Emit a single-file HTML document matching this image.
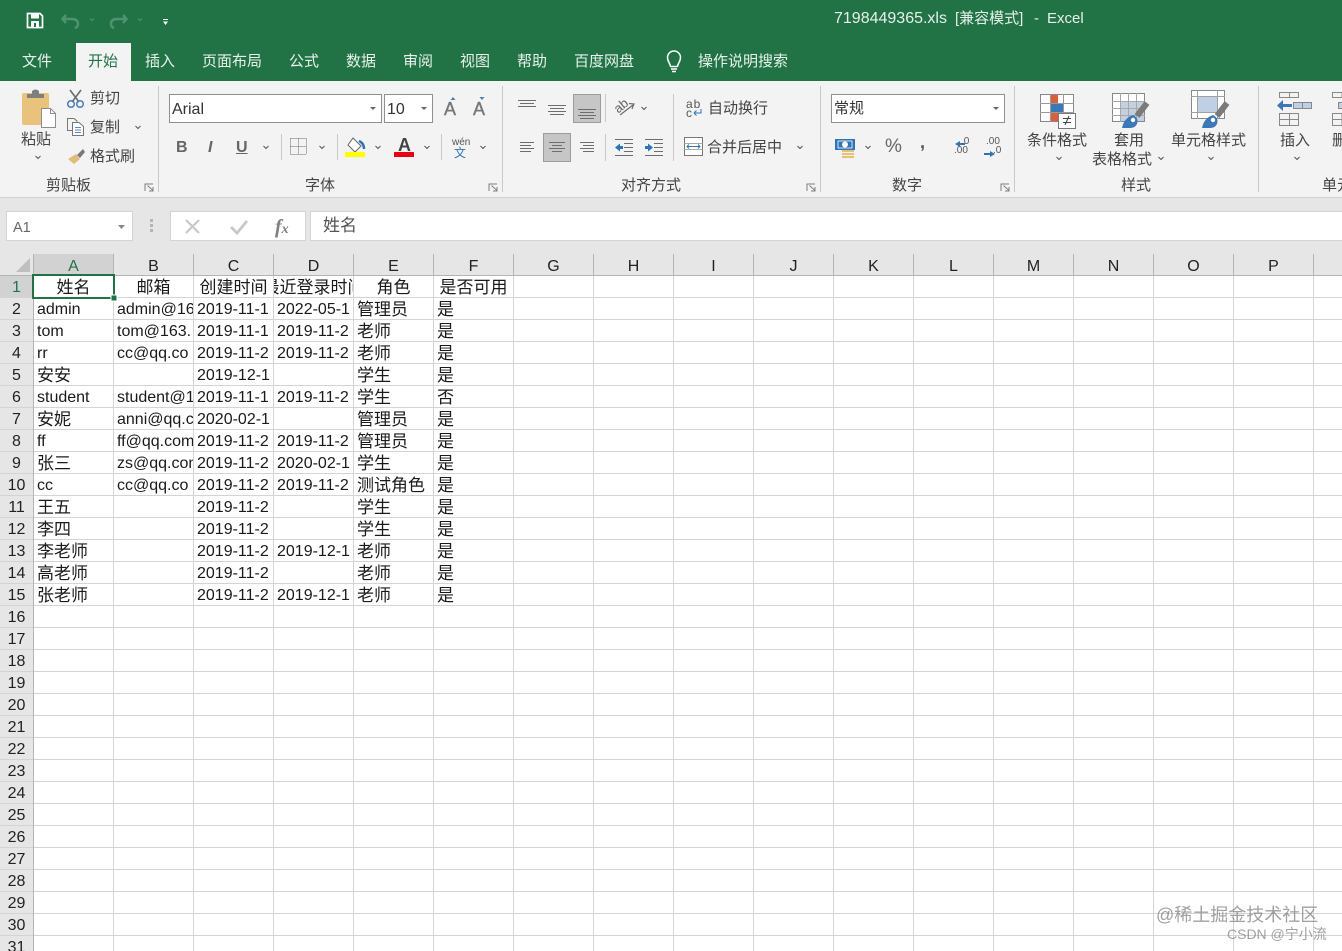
<!DOCTYPE html>
<html lang="zh"><head><meta charset="utf-8"><title>Excel</title>
<style>
html,body{margin:0;padding:0;background:#fff}
#p{position:relative;width:1342px;height:951px;overflow:hidden;background:#fff;font-family:"Liberation Sans","Noto Sans CJK SC",sans-serif;color:#222}
.t{position:absolute;white-space:nowrap;line-height:20px;height:20px}
.tab{top:52px;font-size:15px;color:#e8f1ec}
.rb{font-size:15px;color:#444;margin-top:1px}
.gl{font-size:15px;color:#444;top:176px}
.abs{position:absolute}
.c{position:absolute;height:22px;line-height:24px;overflow:hidden;white-space:nowrap;font-size:16px;color:#1a1a1a;font-family:"Liberation Sans","Noto Sans CJK SC",sans-serif}
.A{left:37px;width:76px}.B{left:117px;width:76px}.C{left:197px;width:76px}.D{left:277px;width:76px}.E{left:357px;width:76px}.F{left:437px;width:76px}
.z{font-size:17px}
.h{display:flex;justify-content:center;font-size:17px;top:276px}
.ch{position:absolute;top:254px;width:79px;height:22px;line-height:25px;text-align:center;font-size:16px;color:#222}
.rh{position:absolute;left:0;width:33px;height:22px;line-height:24px;text-align:center;font-size:16px;color:#222}
</style></head><body><div id="p">
<!-- backgrounds -->
<div class="abs" style="left:0;top:0;width:1342px;height:81px;background:#217346"></div>
<div class="abs" style="left:76px;top:43px;width:55px;height:38px;background:#f3f3f3"></div>
<div class="abs" style="left:0;top:81px;width:1342px;height:116px;background:#f3f3f3"></div>
<div class="abs" style="left:0;top:197px;width:1342px;height:57px;background:#e6e6e6;border-top:1px solid #d2d2d2;box-sizing:border-box"></div>
<div class="abs" style="left:6px;top:211px;width:127px;height:30px;background:#fff;border:1px solid #d4d4d4;box-sizing:border-box"></div>
<div class="abs" style="left:170px;top:211px;width:136px;height:30px;background:#fff;border:1px solid #d4d4d4;box-sizing:border-box"></div>
<div class="abs" style="left:310px;top:211px;width:1040px;height:30px;background:#fff;border:1px solid #d4d4d4;box-sizing:border-box"></div>
<div class="abs" style="left:169px;top:94px;width:213px;height:29px;background:#fff;border:1px solid #8f8f8f;box-sizing:border-box"></div>
<div class="abs" style="left:384px;top:94px;width:49px;height:29px;background:#fff;border:1px solid #8f8f8f;box-sizing:border-box"></div>
<div class="abs" style="left:831px;top:94px;width:174px;height:29px;background:#fff;border:1px solid #8f8f8f;box-sizing:border-box"></div>
<div class="abs" style="left:573px;top:94px;width:28px;height:29px;background:#c6c6c6;border:1px solid #9c9c9c;box-sizing:border-box"></div>
<div class="abs" style="left:543px;top:133px;width:28px;height:29px;background:#c6c6c6;border:1px solid #9c9c9c;box-sizing:border-box"></div>

<!-- grid -->
<svg class="abs" style="left:0;top:0" width="1342" height="951" shape-rendering="crispEdges">
<rect x="0" y="254" width="1342" height="22" fill="#e6e6e6"/>
<rect x="0" y="276" width="33" height="675" fill="#e6e6e6"/>
<rect x="34" y="254" width="80" height="22" fill="#d2d2d2"/>
<rect x="0" y="276" width="33" height="22" fill="#d2d2d2"/>
<path fill="none" stroke="#d4d4d4" d="M0 297.5H1342M0 319.5H1342M0 341.5H1342M0 363.5H1342M0 385.5H1342M0 407.5H1342M0 429.5H1342M0 451.5H1342M0 473.5H1342M0 495.5H1342M0 517.5H1342M0 539.5H1342M0 561.5H1342M0 583.5H1342M0 605.5H1342M0 627.5H1342M0 649.5H1342M0 671.5H1342M0 693.5H1342M0 715.5H1342M0 737.5H1342M0 759.5H1342M0 781.5H1342M0 803.5H1342M0 825.5H1342M0 847.5H1342M0 869.5H1342M0 891.5H1342M0 913.5H1342M0 935.5H1342"/>
<path fill="none" stroke="#d4d4d4" d="M113.5 276V951M193.5 276V951M273.5 276V951M353.5 276V951M433.5 276V951M513.5 276V951M593.5 276V951M673.5 276V951M753.5 276V951M833.5 276V951M913.5 276V951M993.5 276V951M1073.5 276V951M1153.5 276V951M1233.5 276V951M1313.5 276V951"/>
<path fill="none" stroke="#b4b4b4" d="M0 275.5H1342M33.5 254V951M113.5 254V276M193.5 254V276M273.5 254V276M353.5 254V276M433.5 254V276M513.5 254V276M593.5 254V276M673.5 254V276M753.5 254V276M833.5 254V276M913.5 254V276M993.5 254V276M1073.5 254V276M1153.5 254V276M1233.5 254V276M1313.5 254V276"/>
<path d="M30 258V272H16Z" fill="#bfbfbf" shape-rendering="auto"/>
<rect x="33" y="275" width="81" height="23" fill="none" stroke="#217346" stroke-width="2"/>
<rect x="111" y="295" width="6" height="6" fill="#217346" stroke="#fff" stroke-width="1"/>
<rect x="34" y="274" width="80" height="1" fill="#217346"/>
</svg>

<!-- title + tabs -->
<svg class="abs" style="left:0;top:0" width="200" height="44">
<path d="M27.5 13.5H40L42.5 16V27.5H27.5Z" fill="none" stroke="#fff" stroke-width="1.7"/>
<rect x="31" y="14" width="8" height="4.5" fill="#fff"/><rect x="31" y="21" width="8" height="6" fill="#fff"/><rect x="34" y="23" width="2" height="4" fill="#217346"/>
<path d="M66 15L62.5 19L66 23M63 19H72Q78 19 78 24Q78 27 75 28" fill="none" stroke="#4f9270" stroke-width="2.5"/>
<path d="M90 18.5L92 20.5L94 18.5" fill="none" stroke="#4f9270" stroke-width="1"/>
<path d="M123 15L126.5 19L123 23M126 19H117Q111 19 111 24Q111 27 114 28" fill="none" stroke="#4f9270" stroke-width="2.5"/>
<path d="M138 18.5L140 20.5L142 18.5" fill="none" stroke="#4f9270" stroke-width="1"/>
<path d="M163 19.5H168" stroke="#fff" stroke-width="1"/><path d="M163 21.5H168L165.5 25Z" fill="#fff"/>
</svg>
<div class="t" style="left:834px;top:9px;font-size:16px;color:#e6f0eb">7198449365.xls</div>
<div class="t" style="left:955px;top:9px;font-size:15px;color:#e6f0eb">[兼容模式]</div>
<div class="t" style="left:1034px;top:9px;font-size:15px;color:#e6f0eb">-</div>
<div class="t" style="left:1047px;top:9px;font-size:15px;color:#e6f0eb">Excel</div>
<div class="t tab" style="left:22px">文件</div>
<div class="t tab" style="left:88px;color:#217346">开始</div>
<div class="t tab" style="left:145px">插入</div>
<div class="t tab" style="left:202px">页面布局</div>
<div class="t tab" style="left:289px">公式</div>
<div class="t tab" style="left:346px">数据</div>
<div class="t tab" style="left:403px">审阅</div>
<div class="t tab" style="left:460px">视图</div>
<div class="t tab" style="left:517px">帮助</div>
<div class="t tab" style="left:574px">百度网盘</div>
<div class="t tab" style="left:698px">操作说明搜索</div>
<svg class="abs" style="left:660px;top:46px" width="28" height="30"><path d="M10.5 20.5C10 17 7.5 15.5 7.5 11.5A6.5 6.5 0 0 1 20.5 11.5C20.5 15.5 18 17 17.5 20.5Z" fill="none" stroke="#fff" stroke-width="1.5"/><path d="M11 23H17M12 25.5H16" stroke="#fff" stroke-width="1.5"/></svg>

<!-- ribbon icons -->
<svg class="abs" style="left:0;top:0" width="1342" height="254">
<!-- dividers -->
<path d="M158.5 86V192M502.5 86V192M820.5 86V192M1014.5 86V192M1258.5 86V192M281.5 134V160M337.5 134V160M441.5 134V160M605.5 94V122M605.5 134V161M673.5 94V161" stroke="#c9c9c9" fill="none"/>
<!-- paste -->
<rect x="22" y="93" width="27" height="32" rx="2" fill="#e9c27b"/>
<path d="M27 98V94H32V91Q35.5 88 39 91V94H44V98Z" fill="#7f7f7f"/>
<path d="M41.5 108.5H50.5L55.5 113.5V127.5H41.5Z" fill="#fff" stroke="#8d8d8d"/>
<path d="M50.5 108.5V113.5H55.5" fill="none" stroke="#8d8d8d"/>
<!-- scissors -->
<path d="M70 90L79 102M81 90L72 102" stroke="#6a6a6a" stroke-width="1.6" fill="none"/>
<circle cx="71" cy="104" r="3.3" fill="none" stroke="#4a7ebb" stroke-width="1.5"/><circle cx="80" cy="104" r="3.3" fill="none" stroke="#4a7ebb" stroke-width="1.5"/>
<!-- copy -->
<path d="M67.5 118.5H74L77 121V130.5H67.5Z" fill="#f3f3f3" stroke="#777"/>
<path d="M72.5 122.5H79L83.5 126.5V135.5H72.5Z" fill="#fff" stroke="#777"/>
<path d="M75 127.5H81M75 130H81M75 132.5H81" stroke="#5b8ac0"/>
<!-- painter -->
<path d="M77 155L83 149L85 152L80 158Z" fill="#7a7a7a"/>
<path d="M68 159L76 154L80 159L74 164Z" fill="#e0bd7c"/>
<!-- launchers -->
<g fill="none" stroke="#7e7e7e"><path d="M145 191V184H153M147.5 185.5L153 190.5M153 187V191H149"/><path d="M489 191V184H497M491.5 185.5L497 190.5M497 187V191H493"/><path d="M807 191V184H815M809.5 185.5L815 190.5M815 187V191H811"/><path d="M1001 191V184H1009M1003.5 185.5L1009 190.5M1009 187V191H1005"/></g>
<!-- chevrons -->
<g fill="none" stroke="#555" stroke-width="1"><path d="M35.5 156L38 158.5L40.5 156"/><path d="M135.5 126L138 128.5L140.5 126"/><path d="M263.5 146L266 148.5L268.5 146"/><path d="M319.5 146L322 148.5L324.5 146"/><path d="M375.5 146L378 148.5L380.5 146"/><path d="M424.5 146L427 148.5L429.5 146"/><path d="M480.5 146L483 148.5L485.5 146"/><path d="M641.5 107L644 109.5L646.5 107"/><path d="M797.5 146L800 148.5L802.5 146"/><path d="M865.5 146L868 148.5L870.5 146"/><path d="M1056.5 157L1059 159.5L1061.5 157"/><path d="M1158.5 157L1161 159.5L1163.5 157"/><path d="M1208.5 157L1211 159.5L1213.5 157"/><path d="M1294.5 157L1297 159.5L1299.5 157"/></g>
<!-- triangles -->
<g fill="#666"><path d="M370 107H376L373 110Z"/><path d="M421 107H427L424 110Z"/><path d="M993 107H999L996 110Z"/><path d="M118 225H125L121.5 229Z" fill="#888"/></g>
<!-- grow / shrink -->
<path d="M453 97L455.5 100H450.5Z" fill="#4a7ebb"/><path d="M482 100L479.5 97H484.5Z" fill="#4a7ebb"/>
<!-- borders -->
<g shape-rendering="crispEdges" fill="none" stroke="#6e6e6e" stroke-dasharray="1 1"><path d="M290.5 138.5H306.5"/><path d="M290.5 146.5H306.5"/><path d="M290.5 154.500H306.5"/><path d="M290.5 138.5V154.5"/><path d="M298.5 138.5V154.5"/><path d="M306.5 138.5V154.5"/></g>
<!-- fill -->
<path d="M353 138L361 146L355 152L348 145Z" fill="#fff" stroke="#666"/>
<path d="M359 141Q364 143 364 149" fill="none" stroke="#2f75b5" stroke-width="2.5"/>
<rect x="345" y="152" width="20" height="5" fill="#ffff00"/>
<rect x="394" y="152" width="20" height="5" fill="#e60012"/>
<!-- alignment -->
<g stroke="#6d6d6d" fill="none"><path d="M518 100.5H536M520 103.5H534M518 106.5H536"/><path d="M548 105.5H566M550 108.5H564M548 111.5H566M550 114.5H564"/><path d="M578 109.5H596M580 112.5H594M578 115.5H596M580 118.5H594"/>
<path d="M520 142.5H534M520 145.5H531M520 148.5H534M520 151.5H531"/><path d="M549 142.5H565M552 145.5H562M549 148.5H565M552 151.5H562"/><path d="M580 142.5H594M583 145.5H594M580 148.5H594M583 151.5H594"/></g>
<!-- orientation -->
<path d="M620 115L633 105" stroke="#6d6d6d" fill="none" stroke-width="1.2"/><path d="M629 103.5L634 104L632 109" stroke="#6d6d6d" fill="none" stroke-width="1.2"/>
<!-- indents -->
<g stroke="#6d6d6d" fill="none"><path d="M615 139.5H633M624 143.5H633M624 147.5H633M624 151.5H633M615 155.5H633"/><path d="M645 139.5H663M654 143.5H663M654 147.5H663M654 151.5H663M645 155.5H663"/></g>
<path d="M615 147.5L620 143.5V146H623V149H620V151.5Z" fill="#2f75b5"/><path d="M653 147.5L648 143.5V146H645V149H648V151.5Z" fill="#2f75b5"/>
<!-- wrap -->
<path d="M694 113H701V109M694 113L696.5 110.5M694 113L696.5 115.5" fill="none" stroke="#2f75b5"/>
<!-- merge -->
<rect x="684.5" y="137.5" width="18" height="18" fill="#fff" stroke="#777"/><path d="M684.5 143.5H702.5M684.5 149.5H702.5" stroke="#aaa"/><rect x="685" y="144" width="17" height="5" fill="#fff"/>
<path d="M687 146.5H700M689 144.5L687 146.5L689 148.5M698 144.5L700 146.5L698 148.5" fill="none" stroke="#2f75b5"/>
<!-- currency -->
<rect x="835" y="139" width="20" height="11" fill="#2f75b5"/><circle cx="845" cy="144.5" r="3" fill="#fff"/><rect x="838" y="141" width="14" height="7" fill="none" stroke="#fff" stroke-width=".8"/>
<path d="M842 151H854M842 154H854M842 157H854" stroke="#e6bf78" stroke-width="2"/>
<path d="M960 141L955 144L960 147Z" fill="#2f75b5"/><path d="M960 144H965" stroke="#2f75b5" stroke-width="2"/>
<path d="M990 151L995 154L990 157Z" fill="#2f75b5"/><path d="M984 154H991" stroke="#2f75b5" stroke-width="2"/>
<!-- conditional format -->
<g shape-rendering="crispEdges"><rect x="1040.5" y="94.5" width="33" height="27" fill="#fff" stroke="#888"/><path d="M1040 103.5H1074M1040 112.5H1074M1050.5 94V122M1063.5 94V122" stroke="#999" fill="none"/>
<rect x="1051" y="95" width="7" height="8" fill="#d9603d"/><rect x="1051" y="104" width="12" height="8" fill="#3b78b8"/><rect x="1051" y="113" width="9" height="8" fill="#d9603d"/>
<rect x="1058.5" y="113.5" width="17" height="15" fill="#fff" stroke="#777"/></g>
<path d="M1063 122.5H1071M1063 118.5H1071M1069 116L1065 125" stroke="#444" fill="none"/>
<!-- table format -->
<g shape-rendering="crispEdges"><rect x="1112.5" y="93.5" width="32" height="28" fill="#fff" stroke="#888"/><rect x="1120" y="101" width="24" height="20" fill="#c3d0e0"/><path d="M1112 101.5H1145M1112 108.5H1145M1112 115.5H1145M1120.5 93V122M1128.5 93V122M1136.5 93V122" stroke="#a8a8a8" fill="none"/></g>
<path d="M1147 103L1137 116" stroke="#7a7a7a" stroke-width="6" fill="none"/>
<path d="M1122 128Q1124 118 1133 115Q1139 118 1137 124Q1135 128 1130 128Z" fill="#3b78b8"/><circle cx="1133" cy="120" r="2.2" fill="#fff"/>
<!-- cell style -->
<g shape-rendering="crispEdges"><rect x="1191.5" y="90.5" width="33" height="28" fill="#fff" stroke="#888"/><rect x="1198" y="97" width="19" height="15" fill="#c0d0e4"/><path d="M1191 96.5H1225M1191 112.5H1225M1197.5 90V119M1217.5 90V119" stroke="#a0a0a0" fill="none"/></g>
<path d="M1227 103L1217 116" stroke="#7a7a7a" stroke-width="6" fill="none"/>
<path d="M1202 128Q1204 118 1213 115Q1219 118 1217 124Q1215 128 1210 128Z" fill="#3b78b8"/><circle cx="1213" cy="120" r="2.2" fill="#fff"/>
<!-- insert -->
<g shape-rendering="crispEdges" fill="none" stroke="#888"><path d="M1279.5 92.5H1298.5V97.5H1279.5ZM1289.5 92V98"/><path d="M1279.5 113.5H1298.5V125.5H1279.5ZM1279 119.5H1299M1289.5 113V126"/><rect x="1293.5" y="102.5" width="18" height="6" fill="#bdd0e6"/><path d="M1302.5 102V109"/>
<path d="M1332.5 92.5H1342V97.5H1332.5ZM1332.5 113.5H1342V125.5H1332.5ZM1332 119.5H1342"/><rect x="1338.5" y="102.5" width="8" height="6" fill="#bdd0e6"/></g>
<path d="M1277 105.5L1283 100V104H1292V107H1283V111Z" fill="#3b78b8"/>
<!-- formula bar -->
<g fill="#b5b5b5"><rect x="150" y="219" width="3" height="3"/><rect x="150" y="224" width="3" height="3"/><rect x="150" y="229" width="3" height="3"/></g>
<path d="M186 220L199 233M199 220L186 233" stroke="#c8c8c8" stroke-width="2.2" fill="none"/>
<path d="M231 227L237 233L247 221" stroke="#c8c8c8" stroke-width="2.8" fill="none"/>
<text x="275" y="233" font-family="Liberation Serif" font-style="italic" font-weight="700" font-size="20" fill="#808080">f<tspan font-size="14">x</tspan></text>
</svg>

<!-- ribbon text -->
<div class="t rb" style="left:21px;top:129px">粘贴</div>
<div class="t rb" style="left:90px;top:88px">剪切</div>
<div class="t rb" style="left:90px;top:117px">复制</div>
<div class="t rb" style="left:90px;top:146px">格式刷</div>
<div class="t gl" style="left:46px">剪贴板</div>
<div class="t gl" style="left:305px">字体</div>
<div class="t gl" style="left:621px">对齐方式</div>
<div class="t gl" style="left:892px">数字</div>
<div class="t gl" style="left:1121px">样式</div>
<div class="t gl" style="left:1322px">单元</div>
<div class="t" style="left:172px;top:100px;font-size:16px;color:#333">Arial</div>
<div class="t" style="left:387px;top:100px;font-size:16px;color:#333">10</div>
<div class="t" style="left:834px;top:99px;font-size:15px;color:#333">常规</div>
<div class="t" style="left:444px;top:99px;font-size:18px;color:#777;-webkit-text-stroke:.4px #777">A</div>
<div class="t" style="left:473px;top:99px;font-size:18px;color:#777;-webkit-text-stroke:.4px #777">A</div>
<div class="t" style="left:176px;top:138px;font-size:16px;font-weight:700;color:#666">B</div>
<div class="t" style="left:208px;top:138px;font-size:16px;font-weight:700;font-style:italic;color:#666">I</div>
<div class="t" style="left:236px;top:138px;font-size:16px;font-weight:700;color:#666;text-decoration:underline">U</div>
<div class="t" style="left:398px;top:135px;font-size:18px;font-weight:700;color:#444">A</div>
<div class="t" style="left:452px;top:133px;font-size:10px;color:#555">wén</div>
<div class="t" style="left:454px;top:143px;font-size:12px;color:#2f75b5">文</div>
<div class="t" style="left:614px;top:96px;font-size:13px;color:#666;transform:rotate(-40deg)">ab</div>
<div class="t" style="left:686px;top:94px;font-size:12px;color:#555;letter-spacing:1px">ab</div>
<div class="t" style="left:686px;top:103px;font-size:12px;color:#555">c</div>
<div class="t rb" style="left:708px;top:98px">自动换行</div>
<div class="t rb" style="left:707px;top:137px">合并后居中</div>
<div class="t" style="left:885px;top:137px;font-size:19px;color:#666">%</div>
<div class="t" style="left:920px;top:132px;font-size:18px;font-weight:700;color:#555">,</div>
<div class="t" style="left:961px;top:132px;font-size:10px;color:#555">.0</div>
<div class="t" style="left:954px;top:141px;font-size:10px;color:#555">.00</div>
<div class="t" style="left:986px;top:132px;font-size:10px;color:#555">.00</div>
<div class="t" style="left:993px;top:141px;font-size:10px;color:#555">.0</div>
<div class="t rb" style="left:1027px;top:130px">条件格式</div>
<div class="t rb" style="left:1114px;top:130px">套用</div>
<div class="t rb" style="left:1092px;top:149px">表格格式</div>
<div class="t rb" style="left:1171px;top:130px">单元格样式</div>
<div class="t rb" style="left:1280px;top:130px">插入</div>
<div class="t rb" style="left:1332px;top:130px">删除</div>
<div class="t" style="left:13px;top:218px;font-size:14.5px;color:#666">A1</div>
<div class="t" style="left:323px;top:216px;font-size:17px;color:#555">姓名</div>

<!-- column headers -->
<div class="ch" style="left:34px;color:#217346">A</div><div class="ch" style="left:114px">B</div><div class="ch" style="left:194px">C</div><div class="ch" style="left:274px">D</div><div class="ch" style="left:354px">E</div><div class="ch" style="left:434px">F</div><div class="ch" style="left:514px">G</div><div class="ch" style="left:594px">H</div><div class="ch" style="left:674px">I</div><div class="ch" style="left:754px">J</div><div class="ch" style="left:834px">K</div><div class="ch" style="left:914px">L</div><div class="ch" style="left:994px">M</div><div class="ch" style="left:1074px">N</div><div class="ch" style="left:1154px">O</div><div class="ch" style="left:1234px">P</div>

<!-- row headers -->
<div class="rh" style="top:276px;color:#217346">1</div><div class="rh" style="top:298px">2</div><div class="rh" style="top:320px">3</div><div class="rh" style="top:342px">4</div><div class="rh" style="top:364px">5</div><div class="rh" style="top:386px">6</div><div class="rh" style="top:408px">7</div><div class="rh" style="top:430px">8</div><div class="rh" style="top:452px">9</div><div class="rh" style="top:474px">10</div><div class="rh" style="top:496px">11</div><div class="rh" style="top:518px">12</div><div class="rh" style="top:540px">13</div><div class="rh" style="top:562px">14</div><div class="rh" style="top:584px">15</div><div class="rh" style="top:606px">16</div><div class="rh" style="top:628px">17</div><div class="rh" style="top:650px">18</div><div class="rh" style="top:672px">19</div><div class="rh" style="top:694px">20</div><div class="rh" style="top:716px">21</div><div class="rh" style="top:738px">22</div><div class="rh" style="top:760px">23</div><div class="rh" style="top:782px">24</div><div class="rh" style="top:804px">25</div><div class="rh" style="top:826px">26</div><div class="rh" style="top:848px">27</div><div class="rh" style="top:870px">28</div><div class="rh" style="top:892px">29</div><div class="rh" style="top:914px">30</div><div class="rh" style="top:936px">31</div>

<!-- cells -->
<div class="c h" style="left:34px;width:79px">姓名</div>
<div class="c h" style="left:114px;width:79px">邮箱</div>
<div class="c h" style="left:194px;width:79px">创建时间</div>
<div class="c h" style="left:274px;width:79px"><span style="flex:none">最近登录时间</span></div>
<div class="c h" style="left:354px;width:79px">角色</div>
<div class="c h" style="left:434px;width:79px">是否可用</div>

<div class="c A" style="top:298px">admin</div><div class="c B" style="top:298px">admin@16</div><div class="c C" style="top:298px">2019-11-1</div><div class="c D" style="top:298px">2022-05-1</div><div class="c E z" style="top:298px">管理员</div><div class="c F z" style="top:298px">是</div>
<div class="c A" style="top:320px">tom</div><div class="c B" style="top:320px">tom@163.</div><div class="c C" style="top:320px">2019-11-1</div><div class="c D" style="top:320px">2019-11-2</div><div class="c E z" style="top:320px">老师</div><div class="c F z" style="top:320px">是</div>
<div class="c A" style="top:342px">rr</div><div class="c B" style="top:342px">cc@qq.co</div><div class="c C" style="top:342px">2019-11-2</div><div class="c D" style="top:342px">2019-11-2</div><div class="c E z" style="top:342px">老师</div><div class="c F z" style="top:342px">是</div>
<div class="c A z" style="top:364px">安安</div><div class="c C" style="top:364px">2019-12-1</div><div class="c E z" style="top:364px">学生</div><div class="c F z" style="top:364px">是</div>
<div class="c A" style="top:386px">student</div><div class="c B" style="top:386px">student@1</div><div class="c C" style="top:386px">2019-11-1</div><div class="c D" style="top:386px">2019-11-2</div><div class="c E z" style="top:386px">学生</div><div class="c F z" style="top:386px">否</div>
<div class="c A z" style="top:408px">安妮</div><div class="c B" style="top:408px">anni@qq.c</div><div class="c C" style="top:408px">2020-02-1</div><div class="c E z" style="top:408px">管理员</div><div class="c F z" style="top:408px">是</div>
<div class="c A" style="top:430px">ff</div><div class="c B" style="top:430px">ff@qq.com</div><div class="c C" style="top:430px">2019-11-2</div><div class="c D" style="top:430px">2019-11-2</div><div class="c E z" style="top:430px">管理员</div><div class="c F z" style="top:430px">是</div>
<div class="c A z" style="top:452px">张三</div><div class="c B" style="top:452px">zs@qq.com</div><div class="c C" style="top:452px">2019-11-2</div><div class="c D" style="top:452px">2020-02-1</div><div class="c E z" style="top:452px">学生</div><div class="c F z" style="top:452px">是</div>
<div class="c A" style="top:474px">cc</div><div class="c B" style="top:474px">cc@qq.co</div><div class="c C" style="top:474px">2019-11-2</div><div class="c D" style="top:474px">2019-11-2</div><div class="c E z" style="top:474px">测试角色</div><div class="c F z" style="top:474px">是</div>
<div class="c A z" style="top:496px">王五</div><div class="c C" style="top:496px">2019-11-2</div><div class="c E z" style="top:496px">学生</div><div class="c F z" style="top:496px">是</div>
<div class="c A z" style="top:518px">李四</div><div class="c C" style="top:518px">2019-11-2</div><div class="c E z" style="top:518px">学生</div><div class="c F z" style="top:518px">是</div>
<div class="c A z" style="top:540px">李老师</div><div class="c C" style="top:540px">2019-11-2</div><div class="c D" style="top:540px">2019-12-1</div><div class="c E z" style="top:540px">老师</div><div class="c F z" style="top:540px">是</div>
<div class="c A z" style="top:562px">高老师</div><div class="c C" style="top:562px">2019-11-2</div><div class="c E z" style="top:562px">老师</div><div class="c F z" style="top:562px">是</div>
<div class="c A z" style="top:584px">张老师</div><div class="c C" style="top:584px">2019-11-2</div><div class="c D" style="top:584px">2019-12-1</div><div class="c E z" style="top:584px">老师</div><div class="c F z" style="top:584px">是</div>

<!-- watermark -->
<div class="t" style="left:1156px;top:905px;font-size:18px;color:rgba(110,110,110,.65)">@稀土掘金技术社区</div>
<div class="t" style="left:1227px;top:924px;font-size:14px;color:rgba(110,110,110,.65)">CSDN @宁小流</div>
</div></body></html>
